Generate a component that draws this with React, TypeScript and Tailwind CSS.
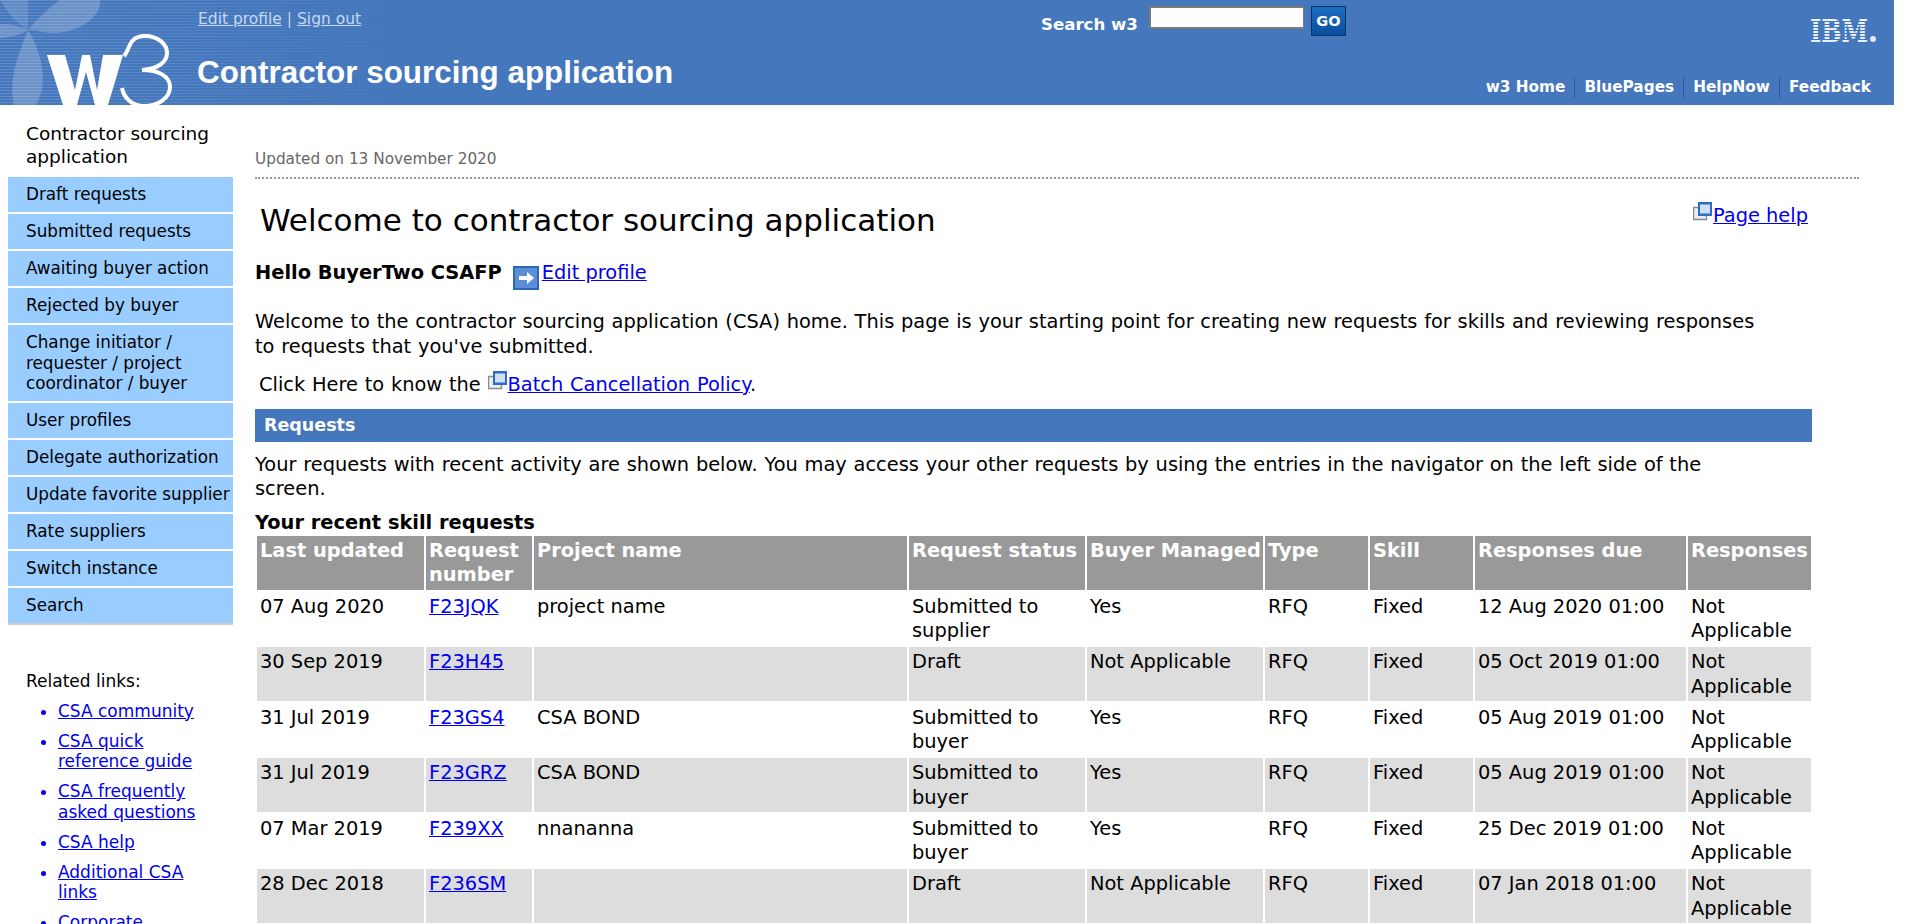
const nav = ["Draft requests","Submitted requests","Awaiting buyer action","Rejected by buyer","Change initiator / requester / project coordinator / buyer","User profiles","Delegate authorization","Update favorite supplier","Rate suppliers","Switch instance","Search"];
const rows = [
["07 Aug 2020","F23JQK","project name","Submitted to supplier","Yes","RFQ","Fixed","12 Aug 2020 01:00"],
["30 Sep 2019","F23H45","","Draft","Not Applicable","RFQ","Fixed","05 Oct 2019 01:00"],
["31 Jul 2019","F23GS4","CSA BOND","Submitted to buyer","Yes","RFQ","Fixed","05 Aug 2019 01:00"],
["31 Jul 2019","F23GRZ","CSA BOND","Submitted to buyer","Yes","RFQ","Fixed","05 Aug 2019 01:00"],
["07 Mar 2019","F239XX","nnananna","Submitted to buyer","Yes","RFQ","Fixed","25 Dec 2019 01:00"],
["28 Dec 2018","F236SM","","Draft","Not Applicable","RFQ","Fixed","07 Jan 2018 01:00"],
];
const heads = ["Last updated","Request number","Project name","Request status","Buyer Managed","Type","Skill","Responses due","Responses"];
const widths = [167,106,373,176,176,103,103,211,123];
function WinIcon(){return <svg width="20" height="19" viewBox="0 0 20 19" className="inline-block align-[1px]"><rect x="0.5" y="5.5" width="13" height="12" fill="#eee" stroke="#8a8a8a" strokeWidth="1.5"/><rect x="5" y="0" width="14" height="14" fill="#2a6cc6"/><rect x="7" y="2.5" width="10" height="9" fill="#cfe0f6"/></svg>}
export default function App(){return(
<div className="h-[924px] w-[1894px] overflow-hidden bg-white text-[19.4px] leading-[24.5px] text-black font-['DejaVu_Sans',sans-serif]">
<header className="relative h-[105px] bg-[#4577bc] overflow-hidden">
 <svg className="absolute left-0 top-0" width="420" height="105" viewBox="0 0 420 105">
 <defs><linearGradient id="f" x1="0" x2="1"><stop offset="0" stopColor="#fff"/><stop offset="0.35" stopColor="#fff" stopOpacity=".7"/><stop offset="1" stopColor="#fff" stopOpacity="0"/></linearGradient>
 <mask id="m"><rect width="420" height="105" fill="url(#f)"/></mask>
 <pattern id="s" width="3" height="3" patternUnits="userSpaceOnUse"><rect width="3" height="1" fill="#fff" opacity=".16"/></pattern></defs>
 <rect width="420" height="105" fill="url(#s)" mask="url(#m)"/>
 <g fill="#fff" opacity=".2"><path d="M28 30C45 10 60 0 60 0h40C102 24 60 40 36 30Z"/><path d="M28 30C40 50 50 80 36 105H14C8 80 18 55 28 30Z"/><path d="M28 30C14 22 6 10 0 0h28Z" opacity=".7"/><path d="M28 30C18 36 6 38 0 38V24C10 24 20 26 28 30Z"/></g>
 <polygon fill="#fff" points="47,55 65,55 75,90 82,55 90,55 97,90 103,55 123,55 108,105 95,105 86,72 77,105 63,105"/>
 <path d="M124 56C130 50 128 36 145 36C158 36 167 44 167 53C167 62 158 69 142 70C158 70 170 76 170 87C170 98 158 106 144 106C132 106 124 98 122 88" fill="none" stroke="#fff" strokeWidth="4"/>
 </svg>
 <div className="absolute left-[198px] top-[7px] text-[15.5px] text-[#c5d9f5]"><a className="underline">Edit profile</a> | <a className="underline">Sign out</a></div>
 <h2 className="absolute left-[197px] top-[54px] text-[31.4px] leading-[38px] font-bold text-white font-['Liberation_Sans',sans-serif]">Contractor sourcing application</h2>
 <div className="absolute left-[1041px] top-[6px] flex items-start gap-[11px]"><span className="mt-[7px] text-[16.6px] leading-[24px] font-bold text-white">Search w3</span><div className="h-[23px] w-[155px] bg-white border border-b-2 border-l-2 border-t-2 border-[#7a7a7a]"></div><div className="ml-[-4px] h-[30px] w-[35px] bg-gradient-to-b from-[#1c6cc0] to-[#0a4f9e] border border-[#06356b] text-white text-[14.5px] font-bold flex items-center justify-center">GO</div></div>
 <svg className="absolute left-[1810px] top-[19px]" width="84" height="26" viewBox="0 0 84 26">
 <text x="0" y="23" fontFamily="DejaVu Serif" fontWeight="700" fontSize="31" textLength="58" lengthAdjust="spacingAndGlyphs" fill="#eaf1fb">IBM</text>
 <g fill="#4577bc">{[2,5,8,11,14,17,20].map(y=><rect key={y} x="0" y={y} width="60" height="1"/>)}</g>
 <circle cx="63" cy="20" r="3" fill="#dfe9f7"/>
 </svg>
 <nav className="absolute right-[14px] top-[77px] flex text-[15.3px] leading-[21px] font-bold text-white">{["w3 Home","BluePages","HelpNow","Feedback"].map((t,i)=><span key={t} className={"px-[9px] "+(i<3?"border-r border-[#2a5a9a]":"")}>{t}</span>)}</nav>
</header>
<div className="flex">
 <aside className="w-[233px] shrink-0 pl-[8px] pt-[17px]">
 <div className="pl-[18px] pr-2 text-[18.5px] leading-[23px] pb-[9px]">Contractor sourcing application</div>
 <div>{nav.map(t=><div key={t} className="bg-[#99ccff] border-b-2 border-white last:border-[#cccccc] pl-[18px] py-[7.25px] text-[16.8px] leading-[20.5px]">{t}</div>)}</div>
 <div className="pl-[18px] pt-[46px] text-[17px] leading-[20.5px]">Related links:
 <ul className="list-disc pl-[32px] mt-[9px] w-[190px] text-[#0000ee]">{["CSA community","CSA quick reference guide","CSA frequently asked questions","CSA help","Additional CSA links","Corporate"].map(t=><li key={t} className="mb-[9.5px]"><a className="underline">{t}</a></li>)}</ul></div>
 </aside>
 <main className="ml-[22px] w-[1557px] pt-[45px]">
 <div className="text-[15.3px] leading-[18px] text-[#666]">Updated on 13 November 2020</div>
 <div className="mt-[9px] w-[1604px] border-t-2 border-dotted border-[#999]"></div>
 <div className="relative">
 <h1 className="ml-[5px] mt-[23px] text-[31px] leading-[36px] font-normal">Welcome to contractor sourcing application</h1>
 <div className="absolute right-[4px] top-[0px] whitespace-nowrap"><WinIcon/><a className="underline text-[#0000ee]">Page help</a></div>
 </div>
 <div className="mt-[19px] font-bold flex items-center">Hello BuyerTwo CSAFP<svg width="26" height="24" viewBox="0 0 26 24" className="ml-[11px] mt-[9px]"><rect width="26" height="24" fill="#2f66b4"/><rect x="2" y="2" width="22" height="20" fill="#5a8fd8"/><path d="M6 10h8V6l7 6-7 6v-4H6Z" fill="#fff"/></svg><a className="ml-[3px] font-normal underline text-[#0000ee]">Edit profile</a></div>
 <p className="mt-[20px] w-[1500px] [word-spacing:0.6px]">Welcome to the contractor sourcing application (CSA) home. This page is your starting point for creating new requests for skills and reviewing responses to requests that you've submitted.</p>
 <p className="mt-[12px] ml-[4px] [word-spacing:0.6px]">Click Here to know the <WinIcon/><a className="underline text-[#0000ee]">Batch Cancellation Policy</a>.</p>
 <div className="mt-[11px] h-[33px] bg-[#4577bc] px-[9px] text-[17.5px] font-bold text-white leading-[33px]">Requests</div>
 <p className="mt-[11px] w-[1500px] [word-spacing:0.6px]">Your requests with recent activity are shown below. You may access your other requests by using the entries in the navigator on the left side of the screen.</p>
 <div className="mt-[10px] font-bold leading-[22px]">Your recent skill requests</div>
 <table className="w-[1557px] table-fixed border-separate border-spacing-x-[2px] border-spacing-y-[2px]">
 <colgroup>{widths.map((w,i)=><col key={i} style={{width:w}}/>)}</colgroup>
 <thead><tr>{heads.map(h=><th key={h} className={"h-[54px] bg-[#999999] px-[3px] pt-[3px] align-top text-left font-bold text-white "+(h==="Buyer Managed"?"whitespace-nowrap":"")}>{h}</th>)}</tr></thead>
 <tbody>{rows.map((r,i)=><tr key={i} className={i%2?"bg-[#dddddd]":""}>{[...r,"Not Applicable"].map((c,j)=><td key={j} className="h-[53.5px] px-[3px] align-top pt-[3px]">{j==1?<a className="underline text-[#0000ee]">{c}</a>:c}</td>)}</tr>)}</tbody>
 </table>
 </main>
</div>
</div>)}
